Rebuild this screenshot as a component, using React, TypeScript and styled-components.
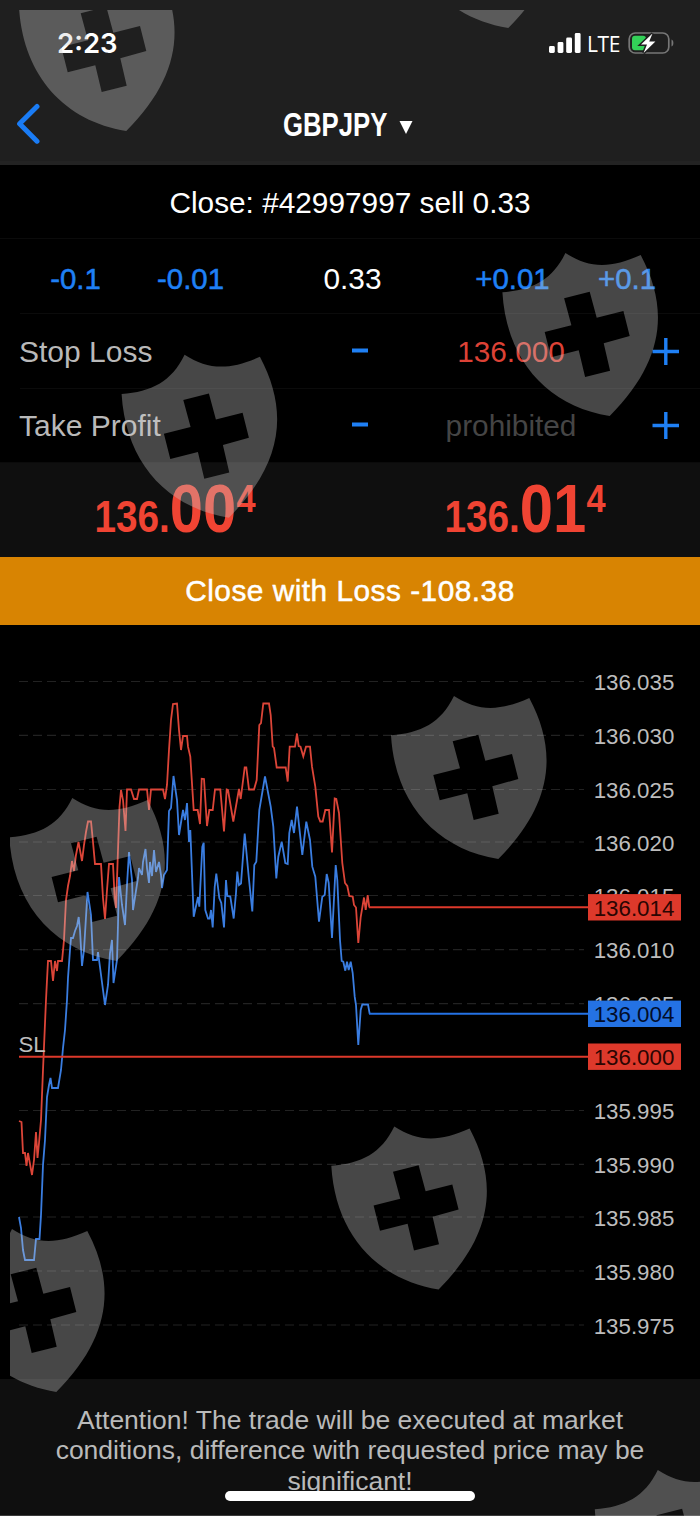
import React from 'react'
import styled, { createGlobalStyle } from 'styled-components'

interface Props{
    color?: string;
    $indent?: boolean;
}

const GlobalStyle = createGlobalStyle`
body{
    margin: 0;
    background: #000;
    overflow: hidden;
}

* {
    box-sizing: border-box;
}
`;

const Screen = styled.div`
position: relative;
display: flex;
flex-direction: column;
width: 700px;
height: 1516px;
overflow: hidden;
background: #000;
font-family: "Liberation Sans", Arial, sans-serif;
font-size: 29.8px;
color: #fff;
`;

const Header = styled.div`
height: 165px;
flex-shrink: 0;
background: #1f1f1f;
border-bottom: 4px solid #232323;
`;

const StatusBar = styled.div`
display: flex;
align-items: center;
justify-content: space-between;
height: 87px;
padding: 0 26px 0 57px;
`;

const Time = styled.span`
font-family: Inter, sans-serif;
font-weight: 600;
font-size: 27.5px;
line-height: 34px;
margin-bottom: 2px;
`;

const StatusIcons = styled.div`
display: flex;
align-items: center;
margin-bottom: 1px;
`;

const Network = styled.span`
font-family: "Open Sans", sans-serif;
font-weight: 500;
font-size: 21px;
line-height: 24px;
letter-spacing: -0.4px;
margin: 1px 8px 0 6px;
`;

const NavBar = styled.div`
display: grid;
grid-template-columns: 60px 1fr 60px;
align-items: center;
height: 74px;
`;

const Back = styled.div`
display: flex;
padding-left: 14px;
`;

const Symbol = styled.div`
display: flex;
align-items: center;
justify-content: center;
gap: 14px;
padding: 1px 4px 0 0;

svg{
    margin-top: 4px;
}
`;

const SymbolName = styled.span`
font-weight: bold;
font-size: 33px;
line-height: 40px;
width: 102px;
white-space: nowrap;
transform: scaleX(0.78);
transform-origin: left;
`;

const Row = styled.div <Props>`
display: flex;
align-items: center;
justify-content: center;
height: 74px;
padding-top: 2px;
flex-shrink: 0;
background: linear-gradient(#0b0b0b, #0b0b0b) no-repeat;
background-size: 100% 1px;
background-position: ${({ $indent }) => $indent ? '20px 100%' : '0 100%'};
`;

const VolumeRow = styled(Row)`
display: grid;
grid-template-columns: 115px 115px 209px 111px 118px;
justify-content: start;
justify-items: center;
height: 75px;
padding: 4px 0 0 18px;
`;

const Step = styled.span`
font-size: 29.4px;
color: #1f80f5;
-webkit-text-stroke: 0.5px #1f80f5;
`;

const LevelRow = styled(Row)`
display: grid;
grid-template-columns: 303px 76px 234px 68px;
justify-content: start;
justify-items: center;
height: 74.5px;
padding: 1px 0 0 19px;

svg{
    display: block;
}
`;

const Label = styled.span`
justify-self: start;
color: #b9b9b9;
font-size: 30px;
line-height: 34px;
`;

const Value = styled.span <Props>`
color: ${({ color }) => color ? color : '#fff'};
padding-right: 8px;
`;

const Quotes = styled.div`
display: grid;
grid-template-columns: 1fr 1fr;
height: 94px;
flex-shrink: 0;
background: #0f0f0f;
`;

const Price = styled.div`
font-weight: bold;
font-size: 68px;
line-height: 90px;
color: #f04433;
text-align: center;
white-space: nowrap;
transform: scaleX(0.88);
`;

const Whole = styled.span`
font-size: 44px;
line-height: 0;
`;

const Pip = styled.span`
font-size: 39px;
line-height: 0;
vertical-align: 20px;
`;

const CloseButton = styled.button`
height: 68px;
flex-shrink: 0;
padding: 0;
border: none;
background: #d88402;
color: #fff;
font-family: inherit;
font-size: 29.8px;
letter-spacing: 0.5px;
-webkit-text-stroke: 0.5px #fff;
`;

const ChartArea = styled.div`
height: 754px;
flex-shrink: 0;

svg{
    display: block;
}
`;

const Footer = styled.div`
flex: 1;
background: #0f0f0f;
border-bottom: 1px solid #3a3a3a;
padding: 26px 40px 0 40px;
text-align: center;
font-size: 26.5px;
line-height: 30.3px;
color: #bababa;
`;

const HomeBar = styled.div`
position: absolute;
left: 225px;
bottom: 15px;
width: 250px;
height: 10px;
border-radius: 5px;
background: #fff;
`;

const Overlay = styled.svg`
position: absolute;
left: 10px;
top: 10px;
pointer-events: none;
`;

const shields = [
    [19, -32], [401, -135], [121.6, 354.7], [502.4, 253], [391, 696],
    [9.3, 798], [331.3, 1126.5], [-51, 1229], [594.8, 1470],
]

const ticks = [
    ['136.035', 681.5], ['136.030', 735.3], ['136.025', 789.5], ['136.020', 842],
    ['136.015', 895.5], ['136.010', 949.7], ['136.005', 1003.7], ['135.995', 1110.5],
    ['135.990', 1164.3], ['135.985', 1217], ['135.980', 1271], ['135.975', 1325],
] as [string, number][]

const levels = [
    { price: '136.014', y: 907.3, from: 369, color: '#dd392b', ink: '#2a0502' },
    { price: '136.004', y: 1013.8, from: 369, color: '#2472e4', ink: '#020d2a' },
    { price: '136.000', y: 1056.7, from: 19, color: '#dd392b', ink: '#2a0502' },
]

const ask = `19,1121 21.5,1122 23,1153 25,1153 26.5,1166 28,1153 32,1175 34,1160 36,1132 37.5,1158 39,1143
41,1120 43,1070 46,1000 47,980 48,961 51,961 53,981 55,961 57,971 58,961 62,961 64,940 66,900 68,886
70,876 72,861 74,871 76,855 78.5,842 82,861 84,845 86,832 88,821.5 91,821.5 93,842 95,864 101,864
103,898 105,919 107,890 109,864 113,864 114.5,895 116,908 118,850 119.5,807 121,790 123,800 125.5,831
127,789.5 131,789.5 134,799 137,799 139,789.5 147,789.5 149,810 151,789.5 163,789.5 165,799 167,785
169,750 171,720 173,704 177,703.5 179,730 181,750 183,736 187,736 188,746.7 190.3,756.7 193.7,810
197.7,810 200,824 201.7,778.7 204,779 207,826 209.3,810 212.7,810 215,789.5 220.3,789.5 224,831.5
226.7,789.5 228,790 233.3,821.5 239,789 240.7,799 244.7,767.5 246.3,767.5 249,789.5 254,789.5
256.7,780 259.3,725 261,723 263.3,703.5 269,703.5 270.7,715 272.7,746.5 274,748 276.7,767.5
285.7,767.5 287.7,781.5 289.7,746.7 295,746.7 297,733.5 298.7,746 300.5,746.7 303.3,756.5 306,746.7
310,746.7 312,766.7 315.3,786.7 318.3,816.5 320.3,821.5 322.7,821.5 325.3,810 329,810 332,852.5
334.7,798.5 336.3,799 339,813 342.3,863 345,883 347.3,886 349.3,896 352.7,896.5 354,905 356,907.5
358.3,943 360.7,917 364,897.5 365.7,910 367.7,895 369.3,907.3`

const bid = `19,1217 21,1228 23,1250 25,1260 34,1260 36,1239 39.5,1239 41,1215 43,1165 45,1140 47,1097
49,1085 50.5,1078 52,1088 58,1088 61,1070 63,1048 65,1030 67,1000 68,978 70,950 71,938 73,938 75,931
77,926 78.7,917 80,930 82,966 84,950 87.5,892 91,915 93,960 97,960 98,952 103,990 105,1005 108,985
110,953 112,940 113.5,983 117,960 118,925 119,877 122,905 125,925 127,885 129,852 132,880 133,910
138,878 139,868 142,875 143,862 145.5,849 147,868 149,883 150,862 152,876 154,850 156,872 159,862
161,875 162,888 164,875 167,870 168,840 169,811 171,808 173.5,776 177,800 179,835 183,810 185,820
187,803 189,842 190.3,830 193.7,916.7 198,897 199.3,906.7 202.3,847 203.7,842.7 205.3,910 208,918.5
209.7,918.5 211,910 212.7,927.5 214.7,887 216.3,873.5 219.3,898 221.3,903 224,927.5 226,880
227.3,896 230.3,896.5 233.7,918.5 236,893 237.3,871.5 239,885 241,883.5 244.7,833.5 248.7,876.5
252.3,911.5 254.3,865 256.3,861.7 259.3,810 265,776.5 270.7,806.7 273.3,826.7 276.3,878.5
278.3,856.7 281.7,841.7 285.3,863 287.7,864 289.3,833 291.7,820 294,833 297,806.7 302.3,855
306.3,821.7 310,840 312.3,866.7 315.3,876.7 319,921.7 322.3,896.7 324.7,895 326.7,874 328.7,883
332,938 335.7,865 337.3,880 340,940 341.7,961 343.3,961.7 345.3,970.7 347,961.7 348.7,970
350.7,961.7 352.7,973 354.7,996.7 356,1005 358.3,1045 360.7,1010 362.3,1004.5 368,1004.5 369.7,1013.8`

const Minus = () => (
    <svg width="16" height="8" viewBox="0 0 16 8">
        <path d="M0 2.5H16" stroke="#1f80f5" strokeWidth="4" />
    </svg>
)

const Plus = () => (
    <svg width="28" height="28" viewBox="0 0 28 28">
        <path d="M0.5 13.5H27M13.8 0V27" stroke="#1f80f5" strokeWidth="3.4" />
    </svg>
)

const Signal = () => (
    <svg width="32" height="22" viewBox="0 0 32 22" fill="#fff">
        <rect x="0" y="14" width="5.8" height="7" rx="1.4" />
        <rect x="8.6" y="10" width="5.8" height="11" rx="1.4" />
        <rect x="17.2" y="5.5" width="5.8" height="15.5" rx="1.4" />
        <rect x="25.8" y="1" width="5.8" height="20" rx="1.4" />
    </svg>
)

const Battery = () => (
    <svg width="46" height="24" viewBox="0 0 46 24">
        <rect x="1.2" y="2" width="39.6" height="20" rx="6" fill="none" stroke="#777" strokeWidth="1.7" />
        <rect x="4" y="4.8" width="14" height="14.4" rx="3" fill="#33d058" />
        <path d="M43.5 8.5V15.5C46 14.6 46 9.4 43.5 8.5Z" fill="#777" />
        <path
            d="M24.5 2.5L13 13.4H19L15.6 22L27.4 10.6H21.2Z"
            fill="#fff" stroke="#1f1f1f" strokeWidth="3" paintOrder="stroke"
        />
    </svg>
)

const Chart = () => (
    <svg width="700" height="754" viewBox="0 625 700 754" fontSize="22.3">
        {ticks.map(([price, y]) => (
            <g key={price}>
                <path d={`M19 ${y}H584`} stroke="#222" strokeWidth="1.2" strokeDasharray="9 5" />
                <text x="593.7" y={y + 8.6} fill="#bdbdbd">{price}</text>
            </g>
        ))}
        <polyline points={bid} fill="none" stroke="#3a7de0" strokeWidth="1.8" />
        <polyline points={ask} fill="none" stroke="#dc4538" strokeWidth="1.8" />
        <text x="18.5" y="1052" fontSize="22.3" fill="#bdbdbd">SL</text>
        {levels.map(({ price, y, from, color, ink }) => (
            <g key={price}>
                <path d={`M${from} ${y}H590`} stroke={color} strokeWidth="2" />
                <rect x="588" y={y - 13.2} width="93" height="26.4" fill={color} />
                <text x="593.7" y={y + 8.3} fill={ink}>{price}</text>
            </g>
        ))}
    </svg>
)

const Shields = () => (
    <Overlay width="690" height="1506" viewBox="10 10 690 1506">
        {shields.map(([x, y]) => (
            <path
                key={y}
                transform={`translate(${x} ${y})`}
                fill="#cbcbcb"
                fillOpacity="0.35"
                fillRule="evenodd"
                d="M0 39.3C30 37 50 27 63 0C87 15.5 108 15.5 138.3 2C167 56 162 108 107.3 163C45 153 4 107 0 39.3Z
                M61.7 45.3L87.3 38.7L94.3 64.7L121 58L127.3 83L101.3 90.3L107.7 117.7L82.7 124L76.3 97.3L48.7 104.3L42.3 79L69 72.3Z"
            />
        ))}
    </Overlay>
)

export default function App() {
    return (
        <Screen>
            <GlobalStyle />
            <Header>
                <StatusBar>
                    <Time>2:23</Time>
                    <StatusIcons>
                        <Signal />
                        <Network>LTE</Network>
                        <Battery />
                    </StatusIcons>
                </StatusBar>
                <NavBar>
                    <Back>
                        <svg width="28" height="42" viewBox="0 0 28 42">
                            <path d="M23 3.5L5.6 20.7L23 38.2" fill="none" stroke="#1a7cf5" strokeWidth="5" strokeLinecap="round" strokeLinejoin="round" />
                        </svg>
                    </Back>
                    <Symbol>
                        <SymbolName>GBPJPY</SymbolName>
                        <svg width="14" height="14" viewBox="0 0 14 14">
                            <path d="M0.5 1H13.5L7 14Z" fill="#fff" />
                        </svg>
                    </Symbol>
                </NavBar>
            </Header>
            <Row>Close: #42997997 sell 0.33</Row>
            <VolumeRow $indent>
                <Step>-0.1</Step>
                <Step>-0.01</Step>
                <span>0.33</span>
                <Step>+0.01</Step>
                <Step>+0.1</Step>
            </VolumeRow>
            <LevelRow $indent>
                <Label>Stop Loss</Label>
                <Minus />
                <Value color="#dd4236">136.000</Value>
                <Plus />
            </LevelRow>
            <LevelRow>
                <Label>Take Profit</Label>
                <Minus />
                <Value color="#454545">prohibited</Value>
                <Plus />
            </LevelRow>
            <Quotes>
                <Price><Whole>136.</Whole>00<Pip>4</Pip></Price>
                <Price><Whole>136.</Whole>01<Pip>4</Pip></Price>
            </Quotes>
            <CloseButton>Close with Loss -108.38</CloseButton>
            <ChartArea>
                <Chart />
            </ChartArea>
            <Footer>
                Attention! The trade will be executed at market conditions, difference with requested price may be significant!
            </Footer>
            <HomeBar />
            <Shields />
        </Screen>
    )
}
